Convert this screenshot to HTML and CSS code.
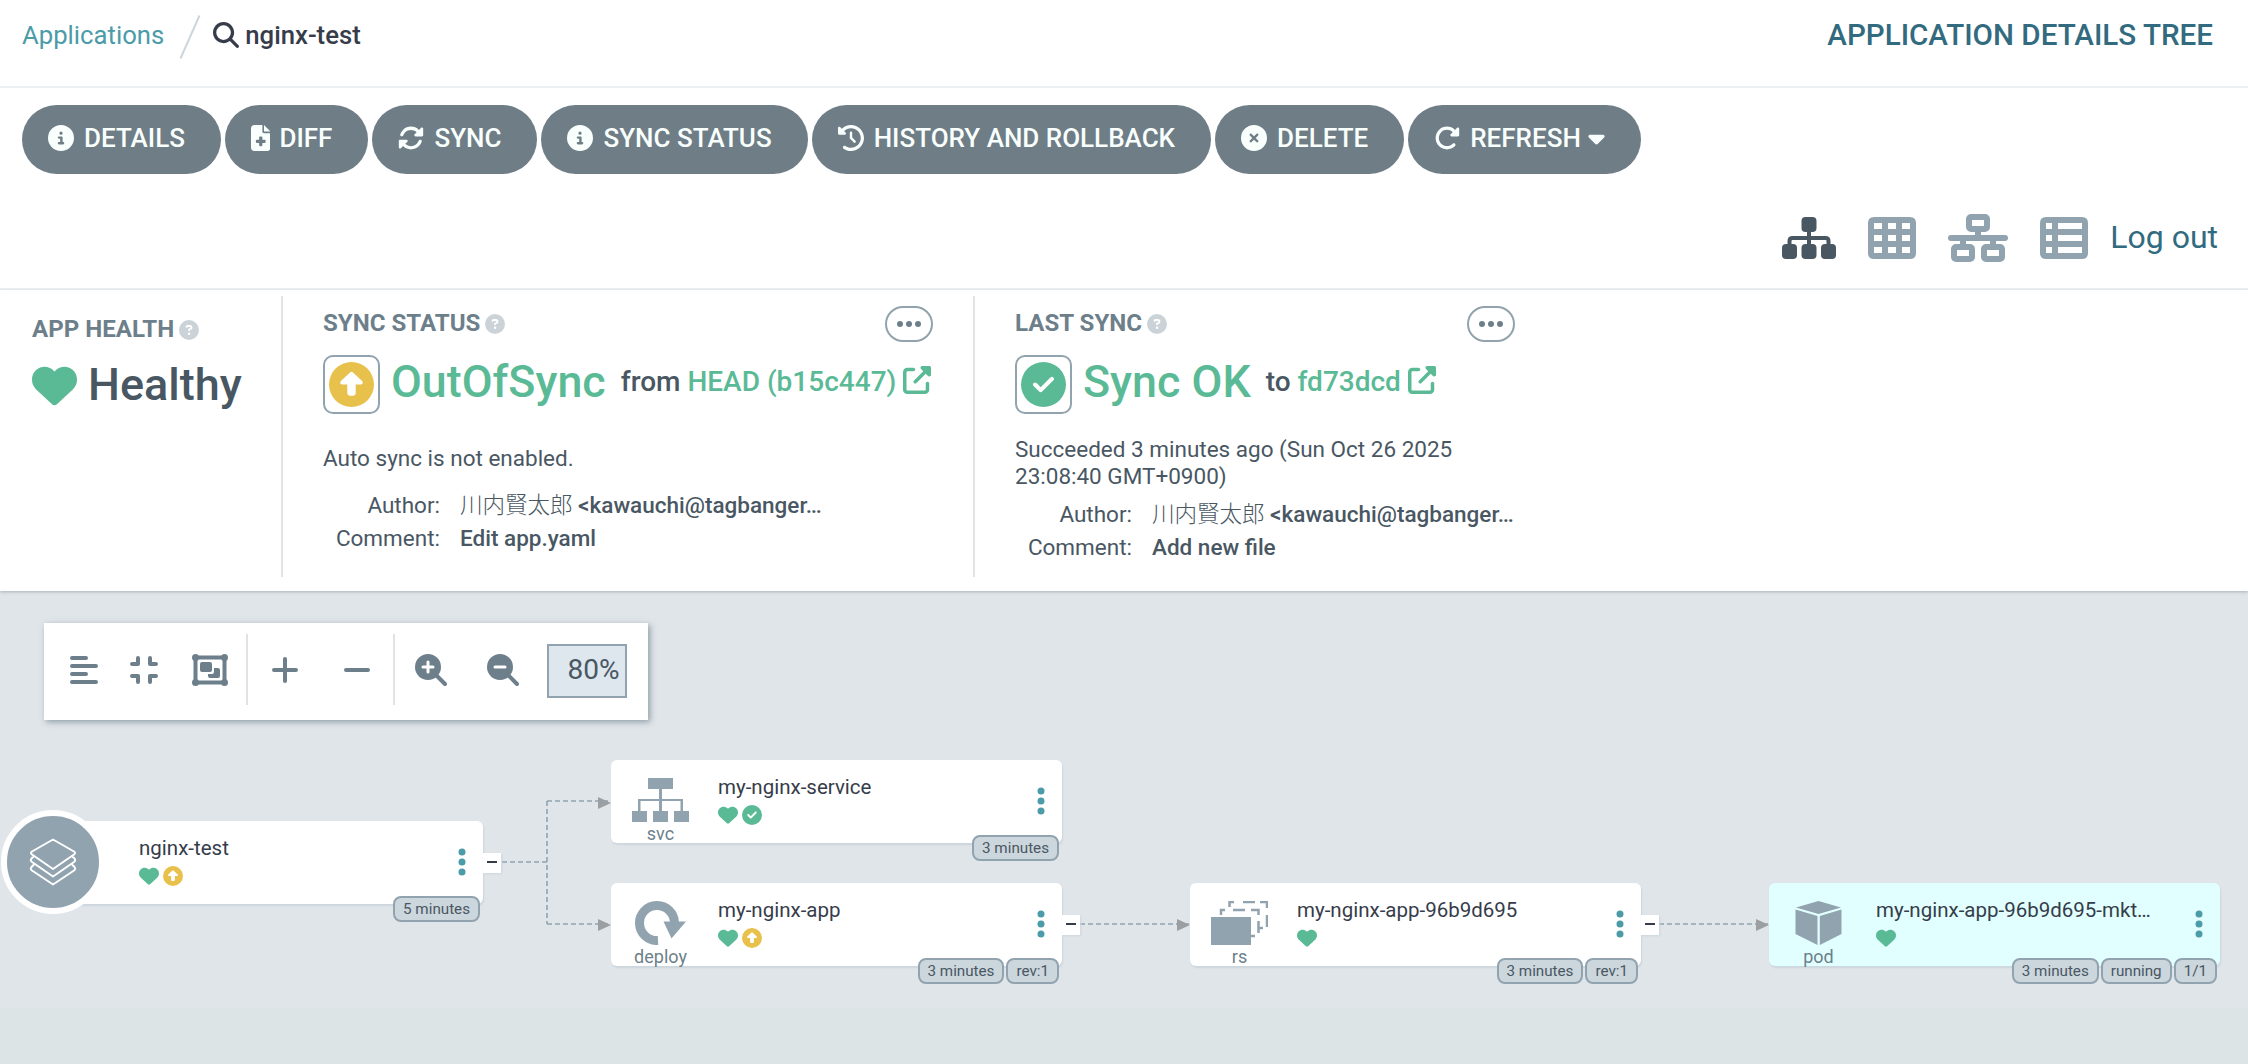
FILE: index.html
```
<!DOCTYPE html>
<html lang="en">
<head>
    <meta charset="UTF-8">
    <meta name="viewport" content="width=device-width, initial-scale=1.0">
    <title>nginx-test - Application Details Tree</title>
    <link rel="stylesheet" href="styles.css">
</head>
<body>
    <!-- Shared icons -->
    <svg class="sprite" aria-hidden="true">
        <symbol id="i-search" viewBox="0 0 512 512"><path d="M416 208c0 45.9-14.9 88.3-40 122.7L502.6 457.4c12.5 12.5 12.5 32.8 0 45.3s-32.8 12.5-45.3 0L330.7 376c-34.4 25.2-76.8 40-122.7 40C93.1 416 0 322.9 0 208S93.1 0 208 0S416 93.1 416 208zM208 352a144 144 0 1 0 0-288 144 144 0 1 0 0 288z"/></symbol>
        <symbol id="i-info" viewBox="0 0 512 512"><path d="M256 512A256 256 0 1 0 256 0a256 256 0 1 0 0 512zM216 336h24V272H216c-13.3 0-24-10.7-24-24s10.7-24 24-24h48c13.3 0 24 10.7 24 24v88h8c13.3 0 24 10.7 24 24s-10.7 24-24 24H216c-13.3 0-24-10.7-24-24s10.7-24 24-24zm40-208a32 32 0 1 1 0 64 32 32 0 1 1 0-64z"/></symbol>
        <symbol id="i-diff" viewBox="0 0 384 512"><path d="M64 0C28.7 0 0 28.7 0 64V448c0 35.3 28.7 64 64 64H320c35.3 0 64-28.7 64-64V160H256c-17.7 0-32-14.3-32-32V0H64zM256 0V128H384L256 0zM160 240c0-8.8 7.2-16 16-16h32c8.8 0 16 7.2 16 16v48h48c8.8 0 16 7.2 16 16v32c0 8.8-7.2 16-16 16H224v48c0 8.8-7.2 16-16 16H176c-8.8 0-16-7.2-16-16V352H112c-8.8 0-16-7.2-16-16V304c0-8.8 7.2-16 16-16h48V240z"/></symbol>
        <symbol id="i-sync" viewBox="0 0 512 512"><path d="M142.9 142.9c62.2-62.2 162.7-62.5 225.3-1L327 183c-6.9 6.9-8.9 17.2-5.2 26.2s12.5 14.8 22.2 14.8H472c13.3 0 24-10.7 24-24V72c0-9.7-5.8-18.5-14.8-22.2s-19.3-1.7-26.2 5.2L413.4 96.6c-87.6-86.5-228.7-86.2-315.8 1C73.2 122 55.6 150.7 44.8 181.4c-5.9 16.7 2.9 34.9 19.5 40.8s34.9-2.9 40.8-19.5c7.7-21.8 20.2-42.3 37.8-59.8zM16 312V440c0 9.7 5.8 18.5 14.8 22.2s19.3 1.7 26.2-5.2l41.6-41.6c87.6 86.5 228.7 86.2 315.8-1c24.4-24.4 42.1-53.1 52.9-83.7c5.9-16.7-2.9-34.9-19.5-40.8s-34.9 2.9-40.8 19.5c-7.7 21.8-20.2 42.3-37.8 59.8c-62.2 62.2-162.7 62.5-225.3 1L185 329c6.9-6.9 8.9-17.2 5.2-26.2s-12.5-14.8-22.2-14.8H40c-13.3 0-24 10.7-24 24z"/></symbol>
        <symbol id="i-history" viewBox="0 0 512 512"><path d="M75 75L41 41C25.9 25.9 0 36.6 0 57.9V168c0 13.3 10.7 24 24 24H134.1c21.4 0 32.1-25.9 17-41l-30.8-30.8C155 85.5 203 64 256 64c106 0 192 86 192 192s-86 192-192 192c-40.8 0-78.6-12.7-109.7-34.4c-14.5-10.1-34.4-6.6-44.6 7.9s-6.6 34.4 7.9 44.6C151.2 495 201.7 512 256 512c141.4 0 256-114.6 256-256S397.4 0 256 0C185.3 0 121.3 28.7 75 75zm181 53c-13.3 0-24 10.7-24 24V256c0 6.4 2.5 12.5 7 17l72 72c9.4 9.4 24.6 9.4 33.9 0s9.4-24.6 0-33.9l-65-65V152c0-13.3-10.7-24-24-24z"/></symbol>
        <symbol id="i-delete" viewBox="0 0 512 512"><path d="M256 512A256 256 0 1 0 256 0a256 256 0 1 0 0 512zM175 175c9.4-9.4 24.6-9.4 33.9 0l47 47 47-47c9.4-9.4 24.6-9.4 33.9 0s9.4 24.6 0 33.9l-47 47 47 47c9.4 9.4 9.4 24.6 0 33.9s-24.6 9.4-33.9 0l-47-47-47 47c-9.4 9.4-24.6 9.4-33.9 0s-9.4-24.6 0-33.9l47-47-47-47c-9.4-9.4-9.4-24.6 0-33.9z"/></symbol>
        <symbol id="i-refresh" viewBox="0 0 512 512"><path d="M463.5 224H472c13.3 0 24-10.7 24-24V72c0-9.7-5.8-18.5-14.8-22.2s-19.3-1.7-26.2 5.2L413.4 96.6c-87.6-86.5-228.7-86.2-315.8 1c-87.5 87.5-87.5 229.3 0 316.8s229.3 87.5 316.8 0c12.5-12.5 12.5-32.8 0-45.3s-32.8-12.5-45.3 0c-62.5 62.5-163.8 62.5-226.3 0s-62.5-163.8 0-226.3c62.2-62.2 162.7-62.5 225.3-1L327 183c-6.9 6.9-8.9 17.2-5.2 26.2s12.5 14.8 22.2 14.8H463.5z"/></symbol>
        <symbol id="i-caret" viewBox="0 0 320 512"><path d="M137.4 374.6c12.5 12.5 32.8 12.5 45.3 0l128-128c9.2-9.2 11.9-22.9 6.9-34.9s-16.6-19.8-29.6-19.8L32 192c-12.9 0-24.6 7.8-29.6 19.8s-2.2 25.7 6.9 34.9l128 128z"/></symbol>
        <symbol id="i-heart" viewBox="0 0 512 512"><path d="M47.6 300.4L228.3 469.1c7.5 7 17.4 10.9 27.7 10.9s20.2-3.9 27.7-10.9L464.4 300.4c30.4-28.3 47.6-68 47.6-109.5v-5.8c0-69.9-50.5-129.5-119.4-141C347 36.5 300.6 51.4 268 84L256 96 244 84c-32.6-32.6-79-47.5-124.6-39.9C50.5 55.6 0 115.2 0 185.1v5.8c0 41.5 17.2 81.2 47.6 109.5z"/></symbol>
        <symbol id="i-up" viewBox="0 0 512 512"><path d="M256 0a256 256 0 1 0 0 512A256 256 0 1 0 256 0zM135.1 217.4l107.1-99.9c3.8-3.5 8.7-5.5 13.8-5.5s10.1 2 13.8 5.5l107.1 99.9c4.5 4.2 7.1 10.1 7.1 16.3c0 12.3-10 22.3-22.3 22.3H304v96c0 17.7-14.3 32-32 32H240c-17.7 0-32-14.3-32-32V256H150.3C138 256 128 246 128 233.7c0-6.2 2.6-12.1 7.1-16.3z"/></symbol>
        <symbol id="i-check" viewBox="0 0 512 512"><path d="M256 512A256 256 0 1 0 256 0a256 256 0 1 0 0 512zM369 209L241 337c-9.4 9.4-24.6 9.4-33.9 0l-64-64c-9.4-9.4-9.4-24.6 0-33.9s24.6-9.4 33.9 0l47 47L335 175c9.4-9.4 24.6-9.4 33.9 0s9.4 24.6 0 33.9z"/></symbol>
        <symbol id="i-help" viewBox="0 0 512 512"><path d="M256 512A256 256 0 1 0 256 0a256 256 0 1 0 0 512zM169.8 165.3c7.9-22.3 29.1-37.3 52.8-37.3h58.3c34.9 0 63.1 28.3 63.1 63.1c0 22.6-12.1 43.5-31.7 54.8L280 264.4c-.2 13-10.9 23.6-24 23.6c-13.3 0-24-10.7-24-24V250.5c0-8.6 4.6-16.5 12.1-20.8l44.3-25.4c4.7-2.7 7.6-7.7 7.6-13.1c0-8.4-6.8-15.1-15.1-15.1H222.6c-3.4 0-6.4 2.1-7.5 5.3l-.4 1.2c-4.4 12.5-18.2 19-30.6 14.6s-19-18.2-14.6-30.6l.4-1.2zM224 352a32 32 0 1 1 64 0 32 32 0 1 1 -64 0z"/></symbol>
        <symbol id="i-external" viewBox="0 0 512 512"><path d="M352 0c-12.9 0-24.6 7.8-29.6 19.8s-2.2 25.7 6.9 34.9L370.7 96 201.4 265.4c-12.5 12.5-12.5 32.8 0 45.3s32.8 12.5 45.3 0L416 141.3l41.4 41.4c9.2 9.2 22.9 11.9 34.9 6.9s19.8-16.6 19.8-29.6V32c0-17.7-14.3-32-32-32H352zM80 32C35.8 32 0 67.8 0 112V432c0 44.2 35.8 80 80 80H400c44.2 0 80-35.8 80-80V320c0-17.7-14.3-32-32-32s-32 14.3-32 32V432c0 8.8-7.2 16-16 16H80c-8.8 0-16-7.2-16-16V112c0-8.8 7.2-16 16-16H192c17.7 0 32-14.3 32-32s-14.3-32-32-32H80z"/></symbol>
        <symbol id="i-dots" viewBox="0 0 24 6"><circle cx="3" cy="3" r="3"/><circle cx="12" cy="3" r="3"/><circle cx="21" cy="3" r="3"/></symbol>
        <symbol id="i-kebab" viewBox="0 0 8 28"><circle cx="4" cy="4" r="3.5"/><circle cx="4" cy="14" r="3.5"/><circle cx="4" cy="24" r="3.5"/></symbol>
    </svg>

    <header class="top-bar">
        <nav class="breadcrumbs">
            <a class="breadcrumb-link" href="#">Applications</a>
            <svg class="slash" viewBox="0 0 22 44"><path d="M20.500 0.500L1.500 43.500"/></svg>
            <svg class="search-icon"><use href="#i-search"/></svg>
            <span class="breadcrumb-current">nginx-test</span>
        </nav>
        <h1 class="page-title">APPLICATION DETAILS TREE</h1>
    </header>

    <section class="toolbar">
        <div class="actions">
            <button class="action-button"><svg class="icon"><use href="#i-info"/></svg>DETAILS</button>
            <button class="action-button"><svg class="icon narrow"><use href="#i-diff"/></svg>DIFF</button>
            <button class="action-button"><svg class="icon"><use href="#i-sync"/></svg>SYNC</button>
            <button class="action-button"><svg class="icon"><use href="#i-info"/></svg>SYNC STATUS</button>
            <button class="action-button"><svg class="icon"><use href="#i-history"/></svg>HISTORY AND ROLLBACK</button>
            <button class="action-button"><svg class="icon"><use href="#i-delete"/></svg>DELETE</button>
            <button class="action-button"><svg class="icon"><use href="#i-refresh"/></svg>REFRESH<svg class="caret"><use href="#i-caret"/></svg></button>
        </div>
        <div class="views">
            <svg class="view-icon active view-tree" viewBox="0 0 54 42">
                <rect x="19.500" y="0" width="15" height="15" rx="4"/>
                <rect x="0" y="27" width="15" height="15" rx="4"/>
                <rect x="19.500" y="27" width="15" height="15" rx="4"/>
                <rect x="39" y="27" width="15" height="15" rx="4"/>
                <path class="line" d="M27 14V28M7.500 28V24Q7.500 21 10.500 21H43.500Q46.500 21 46.500 24V28"/>
            </svg>
            <svg class="view-icon view-grid" viewBox="0 0 48 42">
                <path fill-rule="evenodd" d="M6 0H42Q48 0 48 6V36Q48 42 42 42H6Q0 42 0 36V6Q0 0 6 0ZM6 6V12H14V6ZM20 6V12H28V6ZM34 6V12H42V6ZM6 18V24H14V18ZM20 18V24H28V18ZM34 18V24H42V18ZM6 30V36H14V30ZM20 30V36H28V30ZM34 30V36H42V30Z"/>
            </svg>
            <svg class="view-icon view-network" viewBox="0 0 60 48">
                <rect class="box" x="21" y="3" width="18" height="12" rx="2"/>
                <rect class="box" x="6" y="33" width="18" height="12" rx="2"/>
                <rect class="box" x="36" y="33" width="18" height="12" rx="2"/>
                <rect x="0" y="21" width="60" height="6" rx="3"/>
                <path d="M27 17H33V22H27ZM12 26H18V31H12ZM42 26H48V31H42Z"/>
            </svg>
            <svg class="view-icon view-list" viewBox="0 0 48 42">
                <path fill-rule="evenodd" d="M6 0H42Q48 0 48 6V36Q48 42 42 42H6Q0 42 0 36V6Q0 0 6 0ZM6 6V12H12V6ZM18 6V12H42V6ZM6 18V24H12V18ZM18 18V24H42V18ZM6 30V36H12V30ZM18 30V36H42V30Z"/>
            </svg>
            <a class="logout" href="#">Log out</a>
        </div>
    </section>

    <section class="status-panel">
        <div class="status-item health">
            <div class="status-label">APP HEALTH<svg class="help"><use href="#i-help"/></svg></div>
            <div class="health-value"><svg class="heart-big"><use href="#i-heart"/></svg>Healthy</div>
        </div>
        <div class="status-item sync">
            <div class="status-head">
                <div class="status-label">SYNC STATUS<svg class="help"><use href="#i-help"/></svg></div>
                <button class="more"><svg><use href="#i-dots"/></svg></button>
            </div>
            <div class="status-value">
                <span class="status-box out-of-sync"><svg><use href="#i-up"/></svg></span>
                <span class="status-text">OutOfSync</span>
                <span class="revision">from <a href="#">HEAD (b15c447)</a></span>
                <svg class="external"><use href="#i-external"/></svg>
            </div>
            <p class="note">Auto sync is not enabled.</p>
            <dl class="meta">
                <dt>Author:</dt>
                <dd><span class="cjk">川内賢太郎</span> &lt;kawauchi@tagbanger…</dd>
                <dt>Comment:</dt>
                <dd>Edit app.yaml</dd>
            </dl>
        </div>
        <div class="status-item last">
            <div class="status-head">
                <div class="status-label">LAST SYNC<svg class="help"><use href="#i-help"/></svg></div>
                <button class="more"><svg><use href="#i-dots"/></svg></button>
            </div>
            <div class="status-value">
                <span class="status-box synced"><svg><use href="#i-check"/></svg></span>
                <span class="status-text">Sync OK</span>
                <span class="revision">to <a href="#">fd73dcd</a></span>
                <svg class="external"><use href="#i-external"/></svg>
            </div>
            <p class="note">Succeeded 3 minutes ago (Sun Oct 26 2025<br>23:08:40 GMT+0900)</p>
            <dl class="meta">
                <dt>Author:</dt>
                <dd><span class="cjk">川内賢太郎</span> &lt;kawauchi@tagbanger…</dd>
                <dt>Comment:</dt>
                <dd>Add new file</dd>
            </dl>
        </div>
    </section>

    <main class="tree">
        <div class="graph-tools">
            <div class="tool-group group-layout">
                <svg class="tool align" viewBox="0 0 28 28"><path d="M2 2H16M2 10H26M2 18H16M2 26H26"/></svg>
                <svg class="tool compress" viewBox="0 0 28 28"><path d="M2 8H8V2M20 2V8H26M2 20H8V26M20 26V20H26"/></svg>
                <svg class="tool group" viewBox="0 0 36 32">
                    <rect class="outline" x="3.500" y="3.500" width="29" height="25"/>
                    <circle cx="3.500" cy="3.500" r="3.500"/><circle cx="32.500" cy="3.500" r="3.500"/>
                    <circle cx="3.500" cy="28.500" r="3.500"/><circle cx="32.500" cy="28.500" r="3.500"/>
                    <rect x="8" y="8" width="12" height="10" rx="2"/>
                    <path d="M22 14H26Q28 14 28 16V22Q28 24 26 24H18Q16 24 16 22V20H20Q22 20 22 18Z"/>
                </svg>
            </div>
            <div class="tool-group group-steps">
                <svg class="tool plus" viewBox="0 0 26 26"><path d="M13 2V24M2 13H24"/></svg>
                <svg class="tool minus" viewBox="0 0 26 26"><path d="M2 13H24"/></svg>
            </div>
            <div class="tool-group group-zoom">
                <svg class="tool zoom" viewBox="0 0 32 32"><circle cx="13" cy="13" r="13"/><path class="handle" d="M20 20L30 30"/><path class="sign" d="M13 8V18M8 13H18"/></svg>
                <svg class="tool zoom" viewBox="0 0 32 32"><circle cx="13" cy="13" r="13"/><path class="handle" d="M20 20L30 30"/><path class="sign" d="M8 13H18"/></svg>
                <div class="zoom-value">80%</div>
            </div>
        </div>

        <!-- Edges between the nodes -->
        <svg class="edges" viewBox="0 0 2248 473">
            <path class="edge" d="M502 271H547M547 210V333M547 210H611M547 333H611M1080 333H1190M1659 333H1769"/>
            <path class="arrow" d="M598 206L611 212L598 218ZM598 328L611 334L598 340ZM1177 328L1190 334L1177 340ZM1756 328L1769 334L1756 340Z"/>
        </svg>

        <article class="node node-root">
            <div class="root-badge">
                <svg viewBox="0 0 48 48"><path d="M24 1.500L45 13.500Q47 15 45 16.500L24 31L3 16.500Q1 15 3 13.500ZM4.500 18.500L2.500 20.500Q1 22.500 3 24L24 38.500L45 24Q47 22.500 45.500 20.500L43.500 18.500M4.500 27L2.500 29Q1 31 3 32.500L24 46.500L45 32.500Q47 31 45.500 29L43.500 27"/></svg>
            </div>
            <div class="node-content">
                <div class="node-title">nginx-test</div>
                <div class="node-status"><svg class="ok"><use href="#i-heart"/></svg><svg class="warn"><use href="#i-up"/></svg></div>
            </div>
            <svg class="kebab"><use href="#i-kebab"/></svg>
            <div class="collapse"></div>
            <div class="tags"><span class="tag">5 minutes</span></div>
        </article>

        <article class="node node-service">
            <div class="node-kind">
                <svg viewBox="0 0 57 44"><path d="M16 0H41V11H16ZM27 11H30V33H27ZM6 21H51V23H6ZM6 21H8.500V33H6ZM48.500 21H51V33H48.500ZM0 33H15V44H0ZM21 33H36V44H21ZM42 33H57V44H42Z"/></svg>
                <span>svc</span>
            </div>
            <div class="node-content">
                <div class="node-title">my-nginx-service</div>
                <div class="node-status"><svg class="ok"><use href="#i-heart"/></svg><svg class="ok"><use href="#i-check"/></svg></div>
            </div>
            <svg class="kebab"><use href="#i-kebab"/></svg>
            <div class="tags"><span class="tag">3 minutes</span></div>
        </article>

        <article class="node node-deploy">
            <div class="node-kind">
                <svg viewBox="0 0 57 44"><path class="ring" d="M26 39.500A17.500 17.500 0 1 1 42.500 22"/><path d="M31.500 20.500H54L39.500 37.500Z"/></svg>
                <span>deploy</span>
            </div>
            <div class="node-content">
                <div class="node-title">my-nginx-app</div>
                <div class="node-status"><svg class="ok"><use href="#i-heart"/></svg><svg class="warn"><use href="#i-up"/></svg></div>
            </div>
            <svg class="kebab"><use href="#i-kebab"/></svg>
            <div class="collapse"></div>
            <div class="tags"><span class="tag">3 minutes</span><span class="tag">rev:1</span></div>
        </article>

        <article class="node node-rs">
            <div class="node-kind">
                <svg viewBox="0 0 57 44"><path d="M0 16H40V44H0Z"/><path class="dash" d="M10 14V9H14M22 9H34M40 9H47.500V14M47.500 20V32M52 27H47.500M44 35H40M18.500 6V1H23M32 1H44M49 1H56V7M56 14V26"/></svg>
                <span>rs</span>
            </div>
            <div class="node-content">
                <div class="node-title">my-nginx-app-96b9d695</div>
                <div class="node-status"><svg class="ok"><use href="#i-heart"/></svg></div>
            </div>
            <svg class="kebab"><use href="#i-kebab"/></svg>
            <div class="collapse"></div>
            <div class="tags"><span class="tag">3 minutes</span><span class="tag">rev:1</span></div>
        </article>

        <article class="node node-pod">
            <div class="node-kind">
                <svg viewBox="0 0 57 44"><path d="M28.500 0L51 6.500L28.500 13L6 6.500ZM5.500 8.500L27.500 15V44L5.500 33ZM51.500 8.500L29.800 15V44L51.500 33Z"/></svg>
                <span>pod</span>
            </div>
            <div class="node-content">
                <div class="node-title">my-nginx-app-96b9d695-mkt…</div>
                <div class="node-status"><svg class="ok"><use href="#i-heart"/></svg></div>
            </div>
            <svg class="kebab"><use href="#i-kebab"/></svg>
            <div class="tags"><span class="tag">3 minutes</span><span class="tag">running</span><span class="tag">1/1</span></div>
        </article>
    </main>
</body>
</html>
```

FILE: styles.css
```
* {
    box-sizing: border-box;
}

body {
    margin: 0;
    height: 1064px;
    overflow: hidden;
    display: flex;
    flex-direction: column;
    font-family: Roboto, "Noto Sans CJK JP", sans-serif;
    color: #495763;
    background-color: #fff;
}

a {
    text-decoration: none;
}

svg {
    flex: none;
    fill: currentColor;
}

.sprite {
    position: absolute;
    width: 0;
    height: 0;
}

/* Top bar */
.top-bar {
    display: flex;
    justify-content: space-between;
    height: 88px;
    padding: 0 35px 0 22px;
    border-bottom: 2px solid #eef1f3;
}

.breadcrumbs {
    display: flex;
    align-items: center;
    height: 70px;
    font-size: 25.700px;
}

.breadcrumb-link {
    color: #4b9ba8;
}

.slash {
    width: 22px;
    height: 44px;
    margin: 4px 12px 0 15px;
    fill: none;
    stroke: #ccd6db;
    stroke-width: 2;
}

.search-icon {
    width: 26px;
    height: 26px;
    margin-right: 6px;
    color: #363c4a;
}

.breadcrumb-current {
    font-weight: 500;
    color: #363c4a;
}

.page-title {
    margin: 0;
    line-height: 70px;
    font-size: 29.600px;
    font-weight: 500;
    color: #326b80;
}

/* Actions and view switcher */
.toolbar {
    height: 202px;
    padding: 17px 30px 0 22px;
    border-bottom: 2px solid #eef1f3;
}

.actions {
    display: flex;
    gap: 4px;
}

.action-button {
    display: flex;
    align-items: center;
    height: 69px;
    padding: 0 36px 4px 26px;
    border: none;
    border-radius: 35px;
    background-color: #6f7d86;
    color: #f8fffd;
    font-family: inherit;
    font-size: 26px;
    font-weight: 500;
    cursor: pointer;
}

.icon {
    width: 26px;
    height: 26px;
    margin-right: 10px;
}

.icon.narrow {
    width: 19.500px;
    margin-right: 9px;
}

.caret {
    width: 17px;
    height: 26px;
    margin-left: 7px;
}

.views {
    display: flex;
    justify-content: flex-end;
    align-items: center;
    height: 48px;
    margin-top: 40px;
}

.view-icon {
    color: #91a3af;
}

.view-icon.active {
    color: #495763;
}

.view-icon .line {
    fill: none;
    stroke: currentColor;
    stroke-width: 4;
}

.view-icon .box {
    fill: none;
    stroke: currentColor;
    stroke-width: 6;
}

.view-tree {
    width: 54px;
    height: 42px;
    margin-right: 32px;
}

.view-grid {
    width: 48px;
    height: 42px;
    margin-right: 32px;
}

.view-network {
    width: 60px;
    height: 48px;
    margin-right: 32px;
}

.view-list {
    width: 48px;
    height: 42px;
    margin-right: 22px;
}

.logout {
    margin-top: -2px;
    font-size: 32px;
    color: #326b80;
}

/* Status panel */
.status-panel {
    display: flex;
    height: 301px;
    padding-top: 6px;
    box-shadow: 0 1px 3px rgba(73, 87, 99, 0.35);
    z-index: 1;
}

.status-item {
    height: 281px;
}

.status-item + .status-item {
    border-left: 2px solid #dfe3e6;
}

.status-item.health {
    width: 281px;
    padding: 20px 0 0 32px;
}

.status-item.sync {
    width: 692px;
    padding: 10px 40px 0 40px;
}

.status-item.last {
    width: 542px;
    padding: 10px 0 0 40px;
}

.status-label {
    display: flex;
    align-items: center;
    height: 26px;
    font-size: 24.100px;
    font-weight: 700;
    color: #6d7f8b;
}

.status-head .status-label {
    margin-top: 4px;
}

.help {
    width: 20px;
    height: 20px;
    margin: 1px 0 0 5px;
    color: #ccd3d8;
}

.health-value {
    display: flex;
    align-items: center;
    margin-top: 17px;
    font-size: 45px;
    line-height: 52px;
    font-weight: 500;
}

.heart-big {
    width: 45px;
    height: 45px;
    margin-right: 11px;
    color: #5bba96;
}

.status-head {
    display: flex;
    justify-content: space-between;
    align-items: flex-start;
    height: 49px;
}

.more {
    display: flex;
    align-items: center;
    justify-content: center;
    width: 48px;
    height: 36px;
    padding: 0;
    border: 2px solid #91a3af;
    border-radius: 18px;
    background: none;
    color: #6d7f8b;
}

.more svg {
    width: 24px;
    height: 6px;
}

.status-value {
    display: flex;
    align-items: center;
    height: 59px;
}

.status-box {
    display: flex;
    align-items: center;
    justify-content: center;
    width: 57px;
    height: 59px;
    margin-right: 11px;
    border: 2px solid #91a3af;
    border-radius: 10px;
}

.status-box svg {
    width: 45px;
    height: 45px;
}

.out-of-sync {
    color: #e8c04c;
}

.synced {
    color: #5bba96;
}

.status-text {
    margin: -6px 15px 0 0;
    font-size: 44.800px;
    font-weight: 500;
    color: #5bba96;
}

.revision {
    margin: -7px 7px 0 0;
    font-size: 28px;
    font-weight: 500;
}

.revision a {
    color: #5bba96;
}

.external {
    width: 28px;
    height: 28px;
    margin-top: -9px;
    color: #5bba96;
}

.note {
    margin: 31px 0 0;
    font-size: 22.500px;
    line-height: 27px;
}

.last .note {
    margin-top: 22px;
}

.meta {
    display: grid;
    grid-template-columns: 117px auto;
    column-gap: 20px;
    margin: 17px 0 0;
    font-size: 22.500px;
    line-height: 33px;
    white-space: nowrap;
}

.last .meta {
    margin-top: 8px;
}

.meta dt {
    text-align: right;
}

.meta dd {
    margin: 0;
    font-weight: 500;
}

.cjk {
    font-weight: 300;
}

/* Resource tree */
.tree {
    position: relative;
    flex: 1;
    background: linear-gradient(#e0e5e9 417px, #dce4e6 417px);
}

.graph-tools {
    display: flex;
    align-items: center;
    width: 604px;
    height: 97px;
    margin: 32px 0 0 44px;
    background-color: #fff;
    box-shadow: 2px 2px 6px rgba(109, 127, 139, 0.7);
    color: #6d7f8b;
}

.tool-group {
    display: flex;
    align-items: center;
    height: 71px;
    margin-top: -4px;
}

.group-layout {
    padding: 0 18px 0 26px;
    gap: 32px;
}

.group-steps {
    padding: 0 23px 0 24px;
    gap: 46px;
    border-left: 2px solid #dfe3e6;
    border-right: 2px solid #dfe3e6;
}

.group-zoom {
    padding-left: 20px;
    gap: 40px;
}

.tool {
    fill: none;
    stroke: currentColor;
    stroke-width: 4;
    stroke-linecap: round;
    stroke-linejoin: round;
}

.align,
.compress {
    width: 28px;
    height: 28px;
}

.tool.group {
    width: 36px;
    height: 32px;
    margin-left: 1.500px;
    fill: currentColor;
    stroke: none;
}

.tool .outline {
    fill: none;
    stroke: currentColor;
    stroke-width: 4;
}

.plus,
.minus {
    width: 26px;
    height: 26px;
}

.zoom {
    width: 32px;
    height: 32px;
}

.zoom circle {
    fill: currentColor;
    stroke: none;
}

.zoom .sign {
    stroke: #fff;
    stroke-width: 3;
}

.zoom-value {
    width: 80px;
    height: 54px;
    margin: 2px 0 0 -12px;
    padding-right: 5px;
    border: 2px solid #91a3af;
    background-color: #dee6ee;
    text-align: right;
    font-size: 28px;
    line-height: 48px;
    color: #495763;
}

.edges {
    position: absolute;
    top: 0;
    left: 0;
    width: 2248px;
    height: 473px;
}

.edge {
    fill: none;
    stroke: #8fa4b1;
    stroke-width: 1.600;
    stroke-dasharray: 5 3;
}

.arrow {
    fill: #9b9fa1;
}

.node {
    position: absolute;
    display: flex;
    width: 451px;
    height: 83px;
    border-radius: 6px;
    background-color: #fff;
    box-shadow: 1px 2px 2px #ccd6dd;
}

.node-root {
    left: 32px;
    top: 230px;
}

.node-service {
    left: 611px;
    top: 169px;
}

.node-deploy {
    left: 611px;
    top: 292px;
}

.node-rs {
    left: 1190px;
    top: 292px;
}

.node-pod {
    left: 1769px;
    top: 292px;
    background-color: #e1fffe;
}

.root-badge {
    position: absolute;
    left: -31px;
    top: -11px;
    display: flex;
    align-items: center;
    justify-content: center;
    width: 104px;
    height: 104px;
    border: 6px solid #fff;
    border-radius: 50%;
    background-color: #91a3af;
}

.root-badge svg {
    width: 48px;
    height: 48px;
    fill: none;
    stroke: #fff;
    stroke-width: 2;
    stroke-linejoin: round;
    stroke-linecap: round;
}

.node-kind {
    display: flex;
    flex-direction: column;
    align-items: center;
    width: 99px;
    padding-top: 18px;
    font-size: 18px;
    line-height: 20px;
    color: #6d7f8b;
}

.node-kind svg {
    width: 57px;
    height: 44px;
    margin-bottom: 2px;
    color: #91a3af;
}

.ring {
    fill: none;
    stroke: currentColor;
    stroke-width: 9;
}

.dash {
    fill: none;
    stroke: currentColor;
    stroke-width: 2.500;
}

.node-content {
    padding: 14px 0 0 8px;
}

.node-root .node-content {
    padding-left: 107px;
}

.node-title {
    font-size: 20.500px;
    line-height: 26px;
    color: #363c4a;
    white-space: nowrap;
}

.node-status {
    display: flex;
    gap: 4px;
    margin-top: 5px;
}

.node-status svg {
    width: 20px;
    height: 20px;
}

.ok {
    color: #5bba96;
}

.warn {
    color: #e8c04c;
}

.kebab {
    width: 8px;
    height: 28px;
    margin: 27px 17px 0 auto;
    color: #4b9ba8;
}

.collapse {
    position: absolute;
    left: 451px;
    top: 32px;
    display: flex;
    align-items: center;
    justify-content: center;
    width: 18px;
    height: 20px;
    background-color: #fff;
    box-shadow: 1px 1px 2px #ccd6dd;
}

.collapse::before {
    content: "";
    width: 10px;
    height: 2px;
    margin-top: -2px;
    background-color: #363c4a;
}

.tags {
    position: absolute;
    right: 3px;
    bottom: -18px;
    display: flex;
    gap: 2px;
}

.tag {
    height: 26px;
    padding: 0 8px;
    border: 2px solid #91a3af;
    border-radius: 8px;
    background-color: #ccd6dd;
    font-size: 15.200px;
    line-height: 22px;
    color: #495763;
    white-space: nowrap;
}
```
